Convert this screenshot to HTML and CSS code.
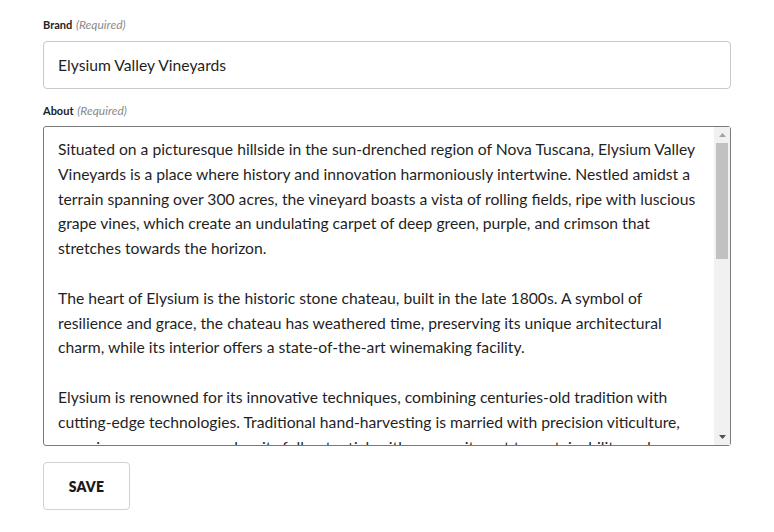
FILE: index.html
```html
<!DOCTYPE html>
<html lang="en">
<head>
<meta charset="utf-8">
<title>Brand</title>
<link rel="stylesheet" href="styles.css">
</head>
<body>
<form class="form">
  <div class="field">
    <label class="label" for="brand">Brand <em class="req">(Required)</em></label>
    <input class="input" id="brand" type="text" value="Elysium Valley Vineyards">
  </div>
  <div class="field field-about">
    <label class="label" for="about">About <em class="req">(Required)</em></label>
    <div class="ta-wrap">
    <textarea class="textarea" id="about">Situated on a picturesque hillside in the sun-drenched region of Nova Tuscana, Elysium Valley
Vineyards is a place where history and innovation harmoniously intertwine. Nestled amidst a
terrain spanning over 300 acres, the vineyard boasts a vista of rolling fields, ripe with luscious
grape vines, which create an undulating carpet of deep green, purple, and crimson that
stretches towards the horizon.

The heart of Elysium is the historic stone chateau, built in the late 1800s. A symbol of
resilience and grace, the chateau has weathered time, preserving its unique architectural
charm, while its interior offers a state-of-the-art winemaking facility.

Elysium is renowned for its innovative techniques, combining centuries-old tradition with
cutting-edge technologies. Traditional hand-harvesting is married with precision viticulture,
ensuring every grape reaches its full potential, with a commitment to sustainability and
biodiversity at the core of every decision made in the vineyard and the cellar.

The estate produces a range of award-winning wines, from crisp, aromatic whites to bold,
full-bodied reds. Its signature wine, the Elysium Reserve, is a blend of Sangiovese and
Cabernet Sauvignon, aged for eighteen months in French oak barrels to develop its rich,
velvety character and notes of dark cherry, leather, and spice.

Visitors to Elysium Valley Vineyards are invited to explore the estate through guided tours,
tastings in the cellar, and seasonal events that celebrate the harvest. The terrace restaurant
offers panoramic views of the valley, paired with a menu inspired by local ingredients.

Whether you are a seasoned connoisseur or a curious newcomer, Elysium Valley Vineyards
promises an unforgettable experience, where every glass tells the story of the land, the
people, and the passion that brought it to life.

Come and discover the magic of Elysium, where tradition and innovation meet in every bottle,
where the beauty of Nova Tuscana awaits you, and where every visit becomes a cherished
memory to be savoured long after the last glass is poured.</textarea>
    <div class="scrollbar" aria-hidden="true">
      <span class="sb-btn sb-up"><svg width="7" height="4" viewBox="0 0 7 4"><polygon points="0,4 7,4 3.5,0" fill="#a3a3a3"/></svg></span>
      <span class="sb-track"><span class="sb-thumb"></span></span>
      <span class="sb-btn sb-down"><svg width="7" height="4" viewBox="0 0 7 4"><polygon points="0,0 7,0 3.5,4" fill="#505050"/></svg></span>
    </div>
    </div>
  </div>
  <button class="btn" type="button">SAVE</button>
</form>
</body>
</html>
```
FILE: styles.css
```css
html, body {
  margin: 0;
  padding: 0;
  background: #ffffff;
}

body {
  font-family: Lato, "Noto Sans", sans-serif;
  color: #1f1f1f;
}

.form {
  display: flex;
  flex-direction: column;
  align-items: flex-start;
  padding: 17px 43px 0 43px;
  width: 688px;
}

.field {
  display: flex;
  flex-direction: column;
  width: 688px;
}

.field-about {
  margin-top: 14px;
}

.label {
  font-family: Lato, sans-serif;
  font-size: 11px;
  line-height: 16px;
  font-weight: 700;
  color: #222222;
  height: 16px;
  margin-bottom: 8px;
  white-space: nowrap;
}

.req {
  font-weight: 400;
  font-style: italic;
  font-size: 12px;
  color: #8a8a8a;
  margin-left: 1px;
}

.field-about .label {
  margin-bottom: 7px;
}

.input {
  box-sizing: border-box;
  width: 688px;
  height: 48px;
  border: 1px solid #c9c9c9;
  border-radius: 4px;
  padding: 0 14px;
  font-family: Lato, sans-serif;
  font-size: 15.7px;
  color: #1f1f1f;
  background: #fff;
  outline: none;
}

.ta-wrap {
  position: relative;
  width: 688px;
  height: 320px;
}

.textarea {
  display: block;
  box-sizing: border-box;
  width: 688px;
  height: 320px;
  margin: 0;
  border: 1px solid #7a7a7a;
  border-radius: 3px;
  padding: 10px 18px 10px 14px;
  font-family: Lato, sans-serif;
  font-size: 15.7px;
  line-height: 24.8px;
  color: #1f1f1f;
  background: #fff;
  resize: none;
  outline: none;
  overflow: hidden;
  white-space: pre;
  scrollbar-width: none;
}

.scrollbar {
  position: absolute;
  top: 1px;
  bottom: 1px;
  right: 1px;
  width: 16px;
  display: flex;
  flex-direction: column;
  background: #f1f1f1;
}

.sb-btn {
  height: 16px;
  flex: 0 0 16px;
  display: flex;
  align-items: center;
  justify-content: center;
}

.sb-btn svg {
  display: block;
}

.sb-track {
  flex: 1 1 auto;
  display: flex;
  flex-direction: column;
  padding: 0 2px 0 2px;
}

.sb-thumb {
  display: block;
  height: 116px;
  background: #c1c1c1;
}

.btn {
  margin-top: 16px;
  box-sizing: border-box;
  width: 87px;
  height: 48px;
  border: 1px solid #d2d2d2;
  border-radius: 4px;
  background: #ffffff;
  font-family: Lato, sans-serif;
  font-size: 14px;
  font-weight: 800;
  color: #1a1a1a;
  letter-spacing: 0.2px;
  cursor: pointer;
}
```
